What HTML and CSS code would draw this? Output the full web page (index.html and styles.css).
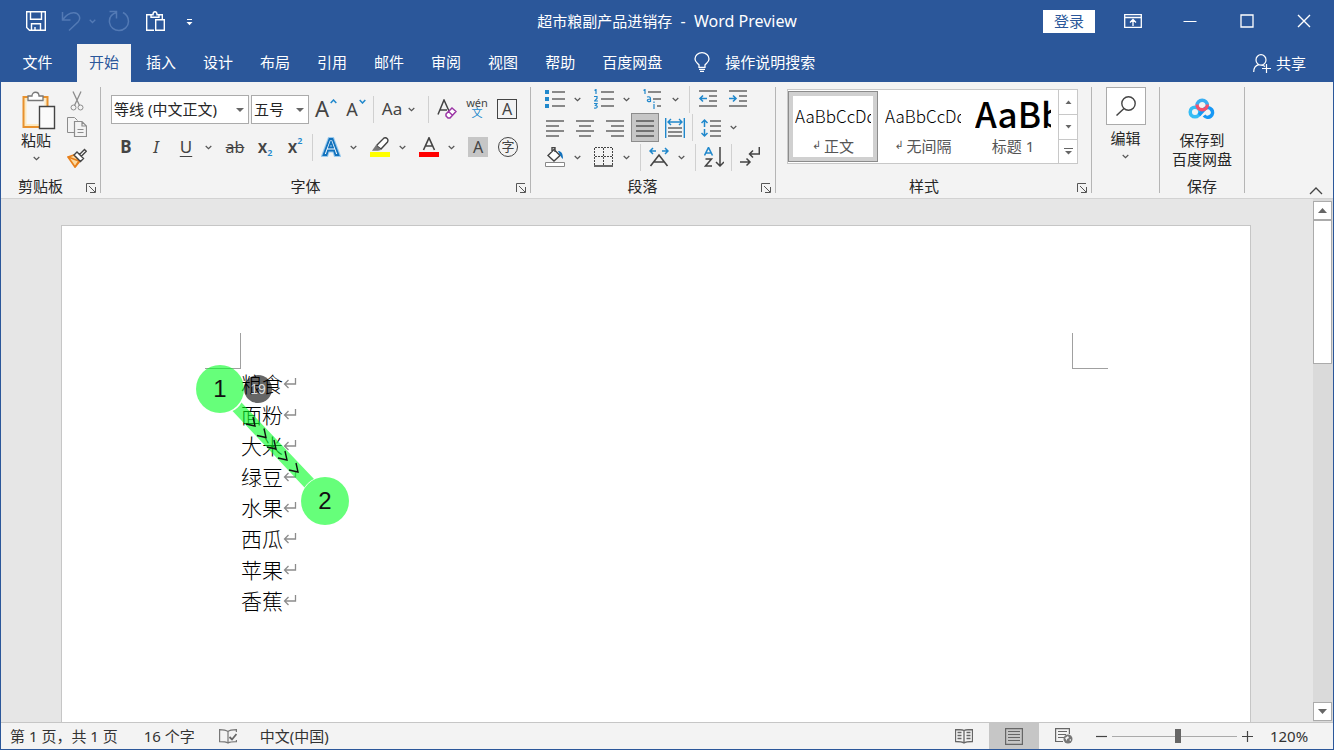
FILE: index.html
```html
<!DOCTYPE html>
<html lang="zh-CN">
<head>
<meta charset="utf-8">
<title>超市粮副产品进销存 - Word Preview</title>
<link rel="stylesheet" href="styles.css">
</head>
<body>
<svg class="defs" aria-hidden="true">
  <symbol id="caret" viewBox="0 0 7 5"><path d="M.7 1 3.5 3.7 6.3 1" fill="none" stroke="#555" stroke-width="1.2"/></symbol>
  <symbol id="launch" viewBox="0 0 10 10"><path d="M.5 9V.5H9M3 3l6 6M9.5 4v5.5H4" fill="none" stroke="#555"/></symbol>
  <symbol id="ret" viewBox="0 0 14 13"><path d="M12.500 1v6H1.500M5.500 3 1.500 7l4 4" fill="none" stroke="#8c8c8c" stroke-width="1.300"/></symbol>
</svg>
<div class="window">
  <header class="titlebar">
    <div class="quick">
      <button class="q" aria-label="保存"><svg width="20" height="20" viewBox="0 0 20 20"><path d="M.7.7h18.600v18.600H3.500L.700 16.500zM4.500.700v7.600h11V.700M5.500 19v-6.300h9V19M9 19v-3" fill="none" stroke="#fff" stroke-width="1.400"/></svg></button>
      <button class="q undo" aria-label="撤消"><svg width="20" height="20" viewBox="0 0 20 20"><path d="M1.500 1v8h8M1.500 9C5 4 9 1.500 13 1.700c5 .3 7.500 5.500 4 9.300L8 19.500" fill="none" stroke="#537ab5" stroke-width="1.500"/></svg></button>
      <button class="q mini" aria-label="撤消列表"><svg width="7" height="5" viewBox="0 0 7 5"><path d="M.7.7 3.500 3.500 6.300.700" fill="none" stroke="#537ab5" stroke-width="1.300"/></svg></button>
      <button class="q redo" aria-label="恢复"><svg width="22" height="22" viewBox="0 0 22 22"><path d="M1.500 1.500h7v7M8.500 2.500C3.500 4 1 8 1.500 12.500c.7 5 5 8 9.500 8 5 0 9.500-4 9.500-9 0-4-2-7-5.500-9" fill="none" stroke="#537ab5" stroke-width="1.500"/></svg></button>
      <button class="q" aria-label="粘贴"><svg width="19" height="21" viewBox="0 0 19 21"><path d="M8 19.300H.700V3.700H5M12 3.700h4.300V8M5 6.300V3.700h2c0-4 4-4 4 0h2v2.600zM9.700 8.700h8.600v10.600H9.700z" fill="none" stroke="#fff" stroke-width="1.400"/></svg></button>
      <button class="q more" aria-label="自定义快速访问工具栏"><svg width="7" height="7" viewBox="0 0 7 7"><path d="M1 .500h5" stroke="#fff"/><path d="M.500 3h6L3.500 6.200z" fill="#fff"/></svg></button>
    </div>
    <h1 class="doc-title">超市粮副产品进销存<span>  -  Word Preview</span></h1>
    <div class="win-controls">
      <button class="login">登录</button>
      <button class="wc first" aria-label="功能区显示选项"><svg width="18" height="14" viewBox="0 0 18 14"><path d="M.700.700h16.600v12.600H.700zM.700 3.500h16.600M9 12V6M6 8.500l3-3 3 3" fill="none" stroke="#fff" stroke-width="1.300"/></svg></button>
      <button class="wc" aria-label="最小化"><svg width="14" height="14"><path d="M.500 7.500h13" stroke="#fff"/></svg></button>
      <button class="wc" aria-label="最大化"><svg width="14" height="14"><path d="M1 1h12v12H1z" fill="none" stroke="#fff" stroke-width="1.300"/></svg></button>
      <button class="wc" aria-label="关闭"><svg width="14" height="14"><path d="m1 1 12 12M13 1 1 13" stroke="#fff" stroke-width="1.400"/></svg></button>
    </div>
  </header>

  <nav class="tabs">
    <button class="tab file">文件</button>
    <button class="tab active">开始</button>
    <button class="tab">插入</button>
    <button class="tab">设计</button>
    <button class="tab">布局</button>
    <button class="tab">引用</button>
    <button class="tab">邮件</button>
    <button class="tab">审阅</button>
    <button class="tab">视图</button>
    <button class="tab">帮助</button>
    <button class="tab">百度网盘</button>
    <button class="tab tell"><svg width="16" height="20" viewBox="0 0 16 20"><path d="M5 15.300v-2.500C3.500 11 1 10 1 7a7 6.300 0 0 1 14 0c0 3-2.500 4-4 5.800v2.500zM5 17.300h6M6 19.300h4" fill="none" stroke="#fff" stroke-width="1.300"/></svg>操作说明搜索</button>
    <button class="tab share"><svg width="18" height="19" viewBox="0 0 18 19"><path d="M.700 18c0-4 2-6.500 5-7.300M8 .700a5 5.200 0 1 1 0 10.400A5 5.200 0 1 1 8 .700M8 11.100c1.500 0 3 .500 4 1.400M13.500 10v9M9 14.500h9" fill="none" stroke="#fff" stroke-width="1.200"/></svg>共享</button>
  </nav>

  <div class="ribbon">
    <section class="group clip">
      <div class="body">
        <button class="paste"><svg width="34" height="39" viewBox="0 0 34 39"><path d="M1.500 6h24v30h-24z" fill="#fde9c0" stroke="#e8912d" stroke-width="2"/><path d="M4.500 9h18v24h-18z" fill="#f7f7f7"/><path d="M6 9.500V5h4c0-5 7-5 7 0h4v4.500z" fill="#fff" stroke="#777" stroke-width="1.300"/><path d="M17.500 15.500h15v22h-15z" fill="#fafafa" stroke="#444" stroke-width="1.400"/></svg>粘贴<svg class="caret" width="7" height="5"><use href="#caret"/></svg></button>
        <div class="rows">
          <button class="ib" aria-label="剪切"><svg width="14" height="20" viewBox="0 0 14 20"><path d="m3 .500 6.500 14M11 .500 4.500 14.500" stroke="#8c8c8c" stroke-width="1.300"/><circle cx="3.500" cy="16.500" r="2.500" fill="none" stroke="#8c8c8c"/><circle cx="10.500" cy="16.500" r="2.500" fill="none" stroke="#8c8c8c"/></svg></button>
          <button class="ib" aria-label="复制"><svg width="20" height="20" viewBox="0 0 20 20"><path d="M7 15.500H.500V.500h7l3 3" fill="none" stroke="#8c8c8c"/><path d="M7.500 4.500h7.500l4.500 4.500v10.500h-12zM15 4.500V9h4.500M10.500 12.500h6M10.500 15.500h6" fill="none" stroke="#8c8c8c" stroke-width="1.200"/></svg></button>
          <button class="ib" aria-label="格式刷"><svg width="20" height="20" viewBox="0 0 20 20"><path d="m1 9 6-2 6 6-5 6z" fill="#fbd9a0" stroke="#e8801c" stroke-width="1.700"/><path d="m1 9 11 4-4 6" fill="none" stroke="#e8801c" stroke-width="1.500"/><path d="m7 7 3-3 6.500 6.500-3 3zM12.500 6.500 17.500 1.500l1.800 1.800-5 5" fill="#fff" stroke="#444" stroke-width="1.400"/></svg></button>
        </div>
      </div>
      <div class="label"><span>剪贴板</span><button aria-label="剪贴板选项"><svg width="10" height="10"><use href="#launch"/></svg></button></div>
    </section>

    <section class="group font">
      <div class="body rows two">
        <div class="row">
          <span class="combo name"><select aria-label="字体"><option>等线 (中文正文)</option></select></span>
          <span class="combo size"><select aria-label="字号"><option>五号</option></select></span>
          <button class="ib grow" aria-label="增大字号"><span class="t20">A</span><svg class="up" width="7" height="5" viewBox="0 0 7 5"><path d="m.700 4 2.800-3 2.800 3" fill="none" stroke="#2088cc" stroke-width="1.500"/></svg></button>
          <button class="ib grow" aria-label="减小字号"><span class="t17">A</span><svg class="up" width="7" height="5" viewBox="0 0 7 5"><path d="m.700 1 2.800 3 2.800-3" fill="none" stroke="#2088cc" stroke-width="1.500"/></svg></button>
          <i class="sep"></i>
          <button class="ib case">Aa<svg width="7" height="5"><use href="#caret"/></svg></button>
          <i class="sep"></i>
          <button class="ib" aria-label="清除格式"><svg width="20" height="20" viewBox="0 0 20 20"><path d="M1 15.500 7 1l5 11M3 11h7" fill="none" stroke="#444" stroke-width="1.500"/><path d="m9 15 6-6 4 3.500-6 6.500h-2l-2-2zM11.500 12.500l4 3.700" fill="#fff" stroke="#9b35a5" stroke-width="1.500"/></svg></button>
          <button class="ib wen"><span>wén</span><b>文</b></button>
          <button class="ib"><span class="boxed">A</span></button>
        </div>
        <div class="row">
          <button class="ib bold">B</button>
          <button class="ib ital">I</button>
          <button class="ib under">U</button>
          <button class="cb" aria-label="下划线样式"><svg width="7" height="5"><use href="#caret"/></svg></button>
          <button class="ib strike">ab</button>
          <button class="ib xs">x<sub>2</sub></button>
          <button class="ib xs">x<sup>2</sup></button>
          <i class="sep"></i>
          <button class="ib" aria-label="文本效果"><svg width="20" height="20" viewBox="0 0 20 20"><path d="M2.500 18 8.500 2h3l6 16h-3l-1.500-4.500h-6L5.500 18z" fill="#fff" stroke="#9ccbee" stroke-width="4"/><path d="M2.500 18 8.500 2h3l6 16h-3l-1.500-4.500h-6L5.500 18zM8 10.500h4L10 5z" fill="#fff" stroke="#1272bd" stroke-width="1.800"/></svg></button>
          <button class="cb" aria-label="文本效果选项"><svg width="7" height="5"><use href="#caret"/></svg></button>
          <button class="ib" aria-label="突出显示"><svg width="20" height="20" viewBox="0 0 20 20"><path d="M0 15h20v5H0z" fill="#ff0"/><path d="m7 8 7-7c2-1 5 1 3.500 4L11 12l-4-3z" fill="#fff" stroke="#444" stroke-width="1.400"/><path d="m6 8 5 5-3 .800H2z" fill="#777"/></svg></button>
          <button class="cb" aria-label="突出显示颜色"><svg width="7" height="5"><use href="#caret"/></svg></button>
          <button class="ib" aria-label="字体颜色"><svg width="20" height="20" viewBox="0 0 20 20"><path d="M0 15h20v5H0z" fill="#f00"/><path d="M4.500 13 10 .800 15.500 13M6.500 9h7" fill="none" stroke="#444" stroke-width="1.600"/></svg></button>
          <button class="cb" aria-label="字体颜色选项"><svg width="7" height="5"><use href="#caret"/></svg></button>
          <button class="ib"><span class="shaded">A</span></button>
          <button class="ib"><span class="ring">字</span></button>
        </div>
      </div>
      <div class="label"><span>字体</span><button aria-label="字体选项"><svg width="10" height="10"><use href="#launch"/></svg></button></div>
    </section>

    <section class="group para">
      <div class="body rows">
        <div class="row">
          <button class="ib" aria-label="项目符号"><svg width="20" height="20"><path d="M0 1h4v4H0zM0 8h4v4H0zM0 15h4v4H0z" fill="#2088cc"/><path d="M7 3h13M7 10h13M7 17h13" stroke="#666" stroke-width="1.600"/></svg></button>
          <button class="cb" aria-label="项目符号库"><svg width="7" height="5"><use href="#caret"/></svg></button>
          <button class="ib" aria-label="编号"><svg width="20" height="20"><path d="M.500 1.500 2 .500V5M0 7.500h3v2L.500 12H4M0 14.500h3l-1.500 2c3 0 2 3.500-1.500 2.500" fill="none" stroke="#2088cc" stroke-width="1.200"/><path d="M7 3h13M7 10h13M7 17h13" stroke="#666" stroke-width="1.600"/></svg></button>
          <button class="cb" aria-label="编号库"><svg width="7" height="5"><use href="#caret"/></svg></button>
          <button class="ib" aria-label="多级列表"><svg width="20" height="20"><path d="M.500 1.500 2 .500V5M4 8c4-1 3.500 1 3.500 4.500C3 13 3.500 10 7.500 10M11 15v5M11 12.500V14" fill="none" stroke="#2088cc" stroke-width="1.200"/><path d="M5 3h13M10 10h8M14 17h4" stroke="#666" stroke-width="1.600"/></svg></button>
          <button class="cb" aria-label="列表库"><svg width="7" height="5"><use href="#caret"/></svg></button>
          <i class="sep"></i>
          <button class="ib" aria-label="减少缩进量"><svg width="20" height="20"><path d="M1 2h18M11 7h8M11 12h8M1 17h18" stroke="#666" stroke-width="1.600"/><path d="M9 9.500H2M5 6.500l-3 3 3 3" fill="none" stroke="#2088cc" stroke-width="1.600"/></svg></button>
          <button class="ib" aria-label="增加缩进量"><svg width="20" height="20"><path d="M1 2h18M11 7h8M11 12h8M1 17h18" stroke="#666" stroke-width="1.600"/><path d="M1 9.500h7M5 6.500l3 3-3 3" fill="none" stroke="#2088cc" stroke-width="1.600"/></svg></button>
        </div>
        <div class="row">
          <button class="ib" aria-label="左对齐"><svg width="20" height="20"><path d="M1 3h18M1 8h13M1 13h18M1 18h13" stroke="#666" stroke-width="1.600"/></svg></button>
          <button class="ib" aria-label="居中"><svg width="20" height="20"><path d="M1 3h18M4 8h12M1 13h18M4 18h12" stroke="#666" stroke-width="1.600"/></svg></button>
          <button class="ib" aria-label="右对齐"><svg width="20" height="20"><path d="M1 3h18M6 8h13M1 13h18M6 18h13" stroke="#666" stroke-width="1.600"/></svg></button>
          <button class="ib pressed" aria-label="两端对齐" aria-pressed="true"><svg width="20" height="20"><path d="M1 3h18M1 8h18M1 13h18M1 18h18" stroke="#555" stroke-width="1.600"/></svg></button>
          <button class="ib" aria-label="分散对齐"><svg width="20" height="20"><path d="M3 10h14M3 14h14M3 18h14" stroke="#666" stroke-width="1.600"/><path d="M.700 0v20M19.300 0v20M3 4h14M6 1 3 4l3 3M14 1l3 3-3 3" fill="none" stroke="#2088cc" stroke-width="1.400"/></svg></button>
          <i class="sep"></i>
          <button class="ib" aria-label="行距"><svg width="20" height="20"><path d="M9 3h11M9 8h11M9 13h11M9 18h11" stroke="#666" stroke-width="1.600"/><path d="M3.500 9V2M.500 5l3-3 3 3M3.500 11v7M.500 15l3 3 3-3" fill="none" stroke="#2088cc" stroke-width="1.500"/></svg></button>
          <button class="cb" aria-label="行距选项"><svg width="7" height="5"><use href="#caret"/></svg></button>
        </div>
        <div class="row">
          <button class="ib" aria-label="底纹"><svg width="20" height="20"><path d="M.500 15.500h19v4H.500z" fill="#fff" stroke="#888"/><path d="m3 8.500 6-6 6 6-6 5.500zM7 5V.500h3V5" fill="#fff" stroke="#444" stroke-width="1.400"/><path d="M13 4c3 0 5 2 5 8-2-1-2-3-3-4z" fill="#1272bd"/></svg></button>
          <button class="cb" aria-label="底纹颜色"><svg width="7" height="5"><use href="#caret"/></svg></button>
          <button class="ib" aria-label="边框"><svg width="20" height="20"><path d="M.500 18V.500h18V18M9.500 1v17M1 9.500h18" fill="none" stroke="#444" stroke-dasharray="2 1"/><path d="M0 19h19" stroke="#444" stroke-width="1.600"/></svg></button>
          <button class="cb" aria-label="边框选项"><svg width="7" height="5"><use href="#caret"/></svg></button>
          <i class="sep"></i>
          <button class="ib" aria-label="中文版式"><svg width="20" height="20"><path d="M1.500 19 10 8l8.500 11M5 15h10" fill="none" stroke="#444" stroke-width="1.600"/><path d="M7 4H1M4 1 1 4l3 3M13 4h6M16 1l3 3-3 3" fill="none" stroke="#2088cc" stroke-width="1.500"/></svg></button>
          <button class="cb" aria-label="中文版式选项"><svg width="7" height="5"><use href="#caret"/></svg></button>
          <i class="sep"></i>
          <button class="ib" aria-label="排序"><svg width="20" height="20"><path d="M.500 8.500 4.500.500l4 8M2 6h5" fill="none" stroke="#2088cc" stroke-width="1.600"/><path d="M1.500 12h6l-6 7H8M16 0v19M12 15l4 4 4-4" fill="none" stroke="#444" stroke-width="1.500"/></svg></button>
          <i class="sep"></i>
          <button class="ib" aria-label="显示编辑标记"><svg width="20" height="20"><path d="M19.300 0v7H10M13 3.500 9.500 7l3.500 3.500M0 15h10M6.500 11.500 10 15l-3.500 3.500" fill="none" stroke="#444" stroke-width="1.500"/></svg></button>
        </div>
      </div>
      <div class="label"><span>段落</span><button aria-label="段落选项"><svg width="10" height="10"><use href="#launch"/></svg></button></div>
    </section>

    <section class="group styles">
      <div class="body">
        <div class="gallery">
          <button class="style chosen"><span class="sample">AaBbCcDd</span><span class="sname"><small>↲</small>正文</span></button>
          <button class="style"><span class="sample">AaBbCcDd</span><span class="sname"><small>↲</small>无间隔</span></button>
          <button class="style"><span class="sample big">AaBbC</span><span class="sname">标题 1</span></button>
          <div class="gscroll">
            <button aria-label="上一行"><svg width="7" height="4"><path d="M.500 4h6l-3-3.500z" fill="#666"/></svg></button>
            <button aria-label="下一行"><svg width="7" height="4"><path d="M.500 0h6l-3 3.500z" fill="#666"/></svg></button>
            <button aria-label="其他样式"><svg width="9" height="9"><path d="M0 1.500h9" stroke="#666"/><path d="M1 4h7L4.500 7.500z" fill="#666"/></svg></button>
          </div>
        </div>
      </div>
      <div class="label"><span>样式</span><button aria-label="样式选项"><svg width="10" height="10"><use href="#launch"/></svg></button></div>
    </section>

    <section class="group edit">
      <button class="bigbtn"><span class="find"><svg width="20" height="20"><circle cx="12.500" cy="7.500" r="6.700" fill="none" stroke="#444" stroke-width="1.400"/><path d="m8 12.500-7.500 7" stroke="#444" stroke-width="1.500"/></svg></span>编辑<svg class="caret" width="7" height="5"><use href="#caret"/></svg></button>
    </section>

    <section class="group save">
      <div class="body">
        <button class="bigbtn cloud"><svg width="28" height="22" viewBox="0 0 28 22"><circle cx="7" cy="15" r="4.800" fill="none" stroke="#35bdf5" stroke-width="3.500"/><path d="M16 18.500a4.800 4.800 0 1 0 1-7L11 18" fill="none" stroke="#1798f5" stroke-width="3.500"/><path d="M9 8.500a5.200 5.200 0 1 1 10.400 0" fill="none" stroke="#3aaef2" stroke-width="3.400"/><path d="M9 7.500a5.200 5.200 0 0 0 10.400 0" fill="none" stroke="#f5506c" stroke-width="3.400"/></svg><span>保存到<br>百度网盘</span></button>
      </div>
      <div class="label plain"><span>保存</span></div>
    </section>
    <button class="collapse" aria-label="折叠功能区"><svg width="14" height="8"><path d="m1 7 6-6 6 6" fill="none" stroke="#444" stroke-width="1.300"/></svg></button>
  </div>

  <main class="work">
    <div class="canvas">
      <article class="page">
        <div class="marks"><i class="mark left"></i><i class="mark right"></i></div>
        <div class="text">
          <p>粮食<svg width="14" height="13"><use href="#ret"/></svg></p>
          <p>面粉<svg width="14" height="13"><use href="#ret"/></svg></p>
          <p>大米<svg width="14" height="13"><use href="#ret"/></svg></p>
          <p>绿豆<svg width="14" height="13"><use href="#ret"/></svg></p>
          <p>水果<svg width="14" height="13"><use href="#ret"/></svg></p>
          <p>西瓜<svg width="14" height="13"><use href="#ret"/></svg></p>
          <p>苹果<svg width="14" height="13"><use href="#ret"/></svg></p>
          <p>香蕉<svg width="14" height="13"><use href="#ret"/></svg></p>
        </div>
        <svg class="gesture" width="153" height="160" viewBox="0 0 153 160">
          <circle cx="62" cy="24" r="14" fill="#000" fill-opacity=".6"/>
          <text x="62" y="29" class="g-small">19</text>
          <g fill="#00ff22" fill-opacity=".6">
            <circle cx="24" cy="24" r="24"/>
            <circle cx="129" cy="136" r="24"/>
            <path d="M45.500 37.500 118 114c-4 2-7 4.500-9.500 8.500L36.500 46c4-2 7-4.500 9-8.500z"/>
          </g>
          <g fill="none" stroke="#111" stroke-width="1.400">
            <path id="chev" d="m50 59 9 2-2-9"/>
            <use href="#chev" x="11" y="11.500"/><use href="#chev" x="21" y="23"/><use href="#chev" x="32" y="34"/><use href="#chev" x="43" y="46"/>
          </g>
          <text x="24" y="32" class="g-num">1</text>
          <text x="129" y="144" class="g-num">2</text>
        </svg>
      </article>
    </div>
    <div class="vscroll">
      <button aria-label="向上滚动"><svg width="9" height="5"><path d="M0 5h9L4.500 0z" fill="#666"/></svg></button>
      <div class="thumb"></div>
      <button class="down" aria-label="向下滚动"><svg width="9" height="5"><path d="M0 0h9L4.500 5z" fill="#666"/></svg></button>
    </div>
  </main>

  <footer class="status">
    <span class="pages">第 1 页，共 1 页</span>
    <span class="words">16 个字</span>
    <button class="proof" aria-label="校对"><svg width="18" height="15" viewBox="0 0 18 15"><path d="M9 14V2.500C7 1 5 .600.600.600v12c4 0 6 0 8.400 1.400 1.500-1 3-1.400 8.400-1.400V11M9 2.500C10.500 1 12 .600 17.400.600V3" fill="none" stroke="#777" stroke-width="1.200"/><path d="m10.500 8 2.500 2.500L17.500 5" fill="none" stroke="#666" stroke-width="1.800"/></svg></button>
    <span class="lang">中文(中国)</span>
    <div class="views">
      <button aria-label="阅读视图"><svg width="18" height="15"><path d="M9 14.500V1.500C7 .500 5 .500.500.500v12c4 0 6.500 0 8.500 1.500 2-1.500 4-1.500 8.500-1.500V.500C13 .500 11 .500 9 1.500M2.500 3.500h4M2.500 6.500h4M2.500 9.500h4M11.500 3.500h4M11.500 6.500h4M11.500 9.500h4" fill="none" stroke="#666" stroke-width="1.300"/></svg></button>
      <button class="on" aria-label="页面视图"><svg width="18" height="17"><path d="M.600.600h16.800v15.800H.600zM3 3.500h12M3 6.500h12M3 9.500h12M3 12.500h12" fill="none" stroke="#666" stroke-width="1.200"/></svg></button>
      <button aria-label="Web 版式视图"><svg width="18" height="16"><path d="M8 13.500H.600V.600h13.800V6M3 3.500h9M3 6.500h8M3 9.500h6" fill="none" stroke="#666" stroke-width="1.200"/><circle cx="13" cy="11" r="4.500" fill="#777"/><path d="m10 10 3-2 1 2-2 1v2zM14 12l2-1v2z" fill="#f3f3f3"/></svg></button>
    </div>
    <button class="zoombtn" aria-label="缩小"><svg width="11" height="11"><path d="M0 5.500h11" stroke="#444" stroke-width="1.200"/></svg></button>
    <input class="zoom" type="range" min="10" max="210" value="116" aria-label="显示比例">
    <button class="zoombtn" aria-label="放大"><svg width="11" height="11"><path d="M0 5.500h11M5.500 0v11" stroke="#444" stroke-width="1.200"/></svg></button>
    <button class="percent">120%</button>
  </footer>
</div>
</body>
</html>
```
FILE: styles.css
```css
* { box-sizing: border-box; }
body {
  margin: 0;
  font: 15px/20px "Noto Sans", "Noto Sans CJK SC", sans-serif;
  color: #262626;
}
button, select { font: inherit; color: inherit; border: 0; padding: 0; margin: 0; background: none; }
button { display: flex; align-items: center; justify-content: center; }
svg { display: block; flex: none; }
.defs { position: absolute; width: 0; height: 0; }

.window {
  height: 100vh;
  display: grid;
  grid-template-rows: auto auto auto 1fr auto;
  border: 1px solid #2b579a;
  border-top: 0;
  overflow: hidden;
}

/* title bar */
.titlebar {
  display: grid;
  grid-template-columns: 1fr auto 1fr;
  align-items: center;
  height: 44px;
  padding-bottom: 2px;
  background: #2b579a;
  color: #fff;
}
.quick { display: flex; align-items: center; padding-left: 25px; }
.undo { margin-left: 15px; }
.mini { margin-left: 8px; }
.redo { margin-left: 12px; margin-right: 16px; }
.more { margin-left: 21px; padding-top: 3px; }
.doc-title { margin: 0; font-size: 15px; font-weight: 400; white-space: pre; }
.doc-title span { font-size: 16px; }
.win-controls { display: flex; align-items: center; justify-content: flex-end; padding-right: 1px; }
.login { width: 52px; height: 23px; background: #fff; color: #2b579a; }
.wc { width: 57px; height: 32px; }
.wc.first { margin-left: 9px; }

/* tabs */
.tabs { display: flex; gap: 3px; height: 38px; background: #2b579a; color: #fff; }
.tab { padding: 0 12px 2px; }
.file { width: 73px; }
.active { background: #f3f3f3; color: #2b579a; }
.tell { gap: 15px; margin-left: 5px; }
.share { gap: 5px; margin-left: auto; padding: 0 27px 0 0; }

/* ribbon */
.ribbon {
  display: flex;
  padding-top: 5px;
  height: 117px;
  background: #f3f3f3;
  border-bottom: 1px solid #d2d2d2;
}
.group { display: flex; flex-direction: column; height: 106px; border-right: 1px solid #b5b5b5; }
.body { flex: 1; }
.label { display: flex; align-items: center; height: 14px; line-height: 14px; }
.label span { flex: 1; text-align: center; }
.label button { width: 18px; height: 14px; padding-top: 4px; }
.row { display: flex; align-items: center; }
.rows { display: grid; grid-template-rows: 24px 29px 26px; gap: 2px; align-content: start; }
.ib { width: 30px; height: 28px; color: #444; }
.cb { width: 19px; height: 28px; padding-right: 4px; }
.sep { width: 1px; height: 27px; margin: 0 3px 0 2px; background: #d0d0d0; }
.caret { margin-top: 6px; }

.clip { width: 100px; }
.clip .body { display: flex; padding-left: 8px; }
.clip .ib { width: 28px; }
.clip .label { margin-left: -2px; }
.paste { flex-direction: column; justify-content: flex-start; width: 54px; padding-top: 4px; }
.paste > svg:first-child { margin-left: 6px; }

.font { width: 430px; padding-left: 10px; }
.font .label, .para .label, .styles .label { margin-left: -12px; }
.two { grid-template-rows: 30px 30px; gap: 8px; padding-top: 7px; }
.combo { position: relative; height: 29px; border: 1px solid #ababab; background: #fff; }
.combo::after {
  content: "";
  position: absolute;
  right: 4px;
  top: 12px;
  border: 4px solid transparent;
  border-top-color: #666;
  border-bottom: 0;
}
.combo select { appearance: none; width: 100%; height: 27px; padding-left: 2px; outline: 0; }
.name { width: 138px; margin-right: 2px; }
.size { width: 58px; margin-right: 2px; }
.grow { gap: 1px; align-items: flex-start; }
.up { margin-top: 4px; }
.t20 { font-size: 22px; line-height: 26px; }
.t17 { font-size: 18px; line-height: 28px; }
.case { width: 49px; gap: 6px; padding-right: 6px; font-size: 17px; }
.wen { flex-direction: column; padding-bottom: 2px; font-size: 11px; line-height: 11px; }
.wen span { line-height: 9px; }
.wen b { color: #2088cc; font-weight: 400; }
.boxed { width: 20px; height: 20px; border: 1px solid #444; font-size: 16px; line-height: 18px; }
.shaded { width: 20px; height: 20px; background: #c6c6c6; font-size: 16px; }
.ring { width: 20px; height: 20px; border: 1px solid #444; border-radius: 50%; font-size: 13px; line-height: 17px; }
.bold { font-size: 17px; font-weight: 700; }
.ital { font-size: 17px; font-style: italic; }
.under { font-size: 17px; text-decoration: underline; text-underline-offset: 3px; }
.strike { font-size: 16px; text-decoration: line-through; }
.xs { font-size: 17px; font-weight: 600; }
.xs sub, .xs sup { color: #2088cc; font-size: 9px; line-height: 10px; }
.xs sub { padding-top: 12px; }
.xs sup { padding-bottom: 12px; }

.para { width: 245px; padding-left: 9px; }
.pressed { width: 28px; height: 29px; margin: 0 1px; background: #c6c6c6; border: 1px solid #8c8c8c; }

.styles { width: 316px; padding-left: 11px; }
.gallery { display: flex; width: 291px; height: 75px; margin-top: 2px; border: 1px solid #c8c8c8; background: #fff; }
.style { width: 90px; height: 71px; margin-top: 1px; padding: 0 7px; flex-direction: column; justify-content: flex-end; align-items: stretch; }
.chosen { border: 1px solid #8c8c8c; box-shadow: inset 0 0 0 4px #d0d0d0; padding: 0 6px; }
.sample { height: 32px; overflow: hidden; text-align: left; white-space: nowrap; font: 17px/26px "Noto Sans CJK SC", sans-serif; font-weight: 300; color: #000; }
.style:not(.chosen) .sname { margin-bottom: 1px; }
.sample.big { height: 44px; font-size: 35px; line-height: 44px; font-weight: 500; }
.sname { display: flex; justify-content: center; align-items: center; gap: 3px; height: 26px; padding-bottom: 4px; color: #555; }
.sname small { font: 11px/20px "DejaVu Sans", sans-serif; }
.gscroll { display: grid; grid-template-rows: 1fr 1fr 1fr; width: 19px; border-left: 1px solid #c8c8c8; }
.gscroll button + button { border-top: 1px solid #c8c8c8; }

.edit { width: 68px; }
.bigbtn { flex-direction: column; width: 100%; }
.find { display: grid; place-items: center; width: 40px; height: 38px; margin-bottom: 3px; border: 1px solid #ababab; background: #fff; }
.save { width: 85px; }
.cloud { padding-top: 10px; line-height: 19px; gap: 12px; }
.collapse { align-self: flex-end; margin-left: auto; width: 34px; height: 15px; }

/* document */
.work { display: flex; min-height: 0; background: #e6e6e6; }
.canvas { flex: 1; padding: 26px 62px 0 60px; overflow: hidden; }
.page { position: relative; height: 100%; padding: 107px 142px 0 143px; background: #fff; border: 1px solid #c6c6c6; border-bottom: 0; }
.marks { display: flex; justify-content: space-between; }
.mark { width: 36px; height: 36px; border-bottom: 1px solid #a0a0a0; }
.mark.left { border-right: 1px solid #a0a0a0; }
.mark.right { border-left: 1px solid #a0a0a0; }
.text { padding-left: 36px; font: 21px/29px "Noto Sans CJK SC", sans-serif; font-weight: 300; color: #000; }
.text p { display: flex; height: 31px; margin: 0; }
.text svg { margin-top: 8px; }
.gesture { position: absolute; left: 134px; top: 139px; }
.g-num { font: 24px "Liberation Sans", sans-serif; text-anchor: middle; fill: #111; }
.g-small { font: 14px "Liberation Sans", sans-serif; text-anchor: middle; fill: #ddd; }

.vscroll { display: flex; flex-direction: column; width: 20px; padding: 2px 1px 1px 0; background: #dadada; }
.vscroll button { height: 19px; background: #fff; border: 1px solid #ababab; }
.thumb { height: 144px; background: #fff; border: 1px solid #ababab; }
.vscroll .down { margin-top: auto; }

/* status bar */
.status { display: flex; align-items: center; height: 27px; padding-left: 9px; background: #f3f3f3; border-top: 1px solid #c6c6c6; white-space: nowrap; color: #333; }
.words { margin-left: 26px; }
.proof { margin: 0 23px 0 24px; }
.views { display: flex; height: 100%; margin-left: auto; margin-right: 7px; }
.views button { width: 50px; }
.views .on { background: #c6c6c6; }
.zoombtn { width: 11px; }
.zoom { appearance: none; width: 125px; height: 14px; margin: 0 5px; background: linear-gradient(#aaa, #aaa) center / 100% 1px no-repeat; }
.zoom::-webkit-slider-thumb { appearance: none; width: 6px; height: 14px; background: #666; }
.percent { width: 40px; margin: 0 24px 0 16px; }
```
